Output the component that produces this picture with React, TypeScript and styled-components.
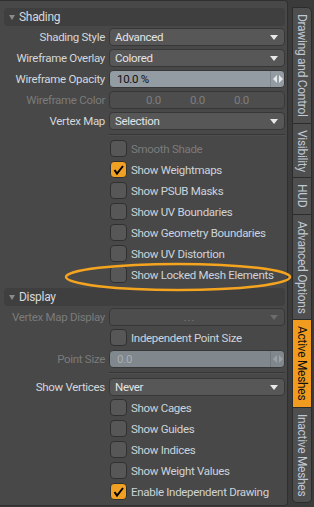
import { FC } from "react";
import styled, { createGlobalStyle } from "styled-components";

const GlobalStyle = createGlobalStyle`
  html, body {
    margin: 0;
    padding: 0;
    background: #3b3b3b;
  }
  body {
    font-family: Roboto, "Liberation Sans", Arial, sans-serif;
    font-size: 11.5px;
    letter-spacing: -0.3px;
    color: #cfd4da;
  }
`;

const Root = styled.div`
  position: relative;
  display: flex;
  width: 314px;
  height: 507px;
  overflow: hidden;
  background: #3b3b3b;
`;

const Panel = styled.div`
  position: relative;
  box-sizing: border-box;
  width: 288px;
  height: 506px;
  padding: 7px 2px 0 4px;
  background: #484848;
  border: 1px solid #2f2f2f;
  border-left: none;
  border-radius: 0 4px 4px 0;
`;

const SectionHeader = styled.div<{ $top?: number }>`
  display: flex;
  align-items: center;
  gap: 4px;
  height: 18px;
  margin-top: ${(p) => p.$top ?? 0}px;
  padding-left: 5px;
  background: #3f3f3f;
  border-radius: 4px;
  color: #d6d9dd;
  font-size: 12px;
`;

const HeaderArrow = styled.span`
  width: 0;
  height: 0;
  border-left: 3.5px solid transparent;
  border-right: 3.5px solid transparent;
  border-top: 5px solid #8a8a8a;
`;

const Row = styled.div`
  display: grid;
  grid-template-columns: 101px 1fr;
  column-gap: 4px;
  align-items: center;
  height: 21px;
`;

const Label = styled.div<{ $disabled?: boolean }>`
  text-align: right;
  white-space: nowrap;
  color: ${(p) => (p.$disabled ? "#7b7b7b" : "#d4d7db")};
`;

const Field = styled.div<{ $disabled?: boolean }>`
  box-sizing: border-box;
  position: relative;
  display: flex;
  align-items: center;
  height: 18px;
  padding-left: 5px;
  background: ${(p) => (p.$disabled ? "#4d4d4d" : "#575757")};
  border: 1px solid #373737;
  border-radius: 4px;
  color: ${(p) => (p.$disabled ? "#7d7d7d" : "#e2e4e6")};
`;

const DropArrow = styled.span<{ $disabled?: boolean }>`
  position: absolute;
  right: 6px;
  top: 6px;
  width: 0;
  height: 0;
  border-left: 4px solid transparent;
  border-right: 4px solid transparent;
  border-top: 5px solid ${(p) => (p.$disabled ? "#6c6c6c" : "#e8e8e8")};
`;

const Dots = styled.span`
  flex: 1;
  text-align: center;
  padding-right: 20px;
  color: #777;
  letter-spacing: 1px;
`;

const Slider = styled.div<{ $disabled?: boolean }>`
  box-sizing: border-box;
  display: flex;
  align-items: stretch;
  height: 18px;
  background: ${(p) => (p.$disabled ? "#80878d" : "#939ca3")};
  border: 1px solid #373737;
  border-radius: 4px;
  color: ${(p) => (p.$disabled ? "#a9aeb2" : "#111")};
  overflow: hidden;
`;

const SliderValue = styled.div`
  flex: 1;
  display: flex;
  align-items: center;
  padding-left: 7px;
`;

const SliderGrip = styled.div<{ $disabled?: boolean }>`
  width: 13px;
  display: flex;
  align-items: center;
  justify-content: center;
  border-left: 1px solid ${(p) => (p.$disabled ? "#70777c" : "#7f878d")};
  color: ${(p) => (p.$disabled ? "#9ba1a6" : "#e6e8ea")};
`;

const ColorCells = styled.div`
  display: grid;
  grid-template-columns: 46px 44px 44px 1fr;
  width: 100%;
`;

const ColorCell = styled.span`
  text-align: right;
`;

const Separator = styled.div`
  height: 7px;
  display: grid;
  grid-template-columns: 101px 1fr;
  column-gap: 4px;
  align-items: center;
  &::after {
    content: "";
    grid-column: 2;
    height: 1px;
    background: #363636;
    box-shadow: 0 1px 0 #4f4f4f;
  }
`;

const CheckRow = styled.label<{ $disabled?: boolean }>`
  display: flex;
  align-items: center;
  gap: 4px;
  height: 21px;
  padding-left: 106px;
  white-space: nowrap;
  color: ${(p) => (p.$disabled ? "#7b7b7b" : "#cdd3da")};
`;

const Box = styled.span<{ $checked?: boolean }>`
  box-sizing: border-box;
  width: 17px;
  height: 17px;
  display: flex;
  align-items: center;
  justify-content: center;
  border: 1px solid #303030;
  border-radius: 4px;
  background: ${(p) => (p.$checked ? "#f0a023" : "#575757")};
`;

const Highlight = styled.svg`
  position: absolute;
  left: 62px;
  top: 260px;
  pointer-events: none;
`;

const TabStrip = styled.div`
  display: flex;
  flex-direction: column;
  padding: 7px 0 0 4px;
`;

const Tab = styled.div<{ $active?: boolean; $last?: boolean }>`
  box-sizing: border-box;
  width: 20px;
  padding: 6px 0;
  writing-mode: vertical-rl;
  display: flex;
  align-items: center;
  white-space: nowrap;
  font-size: 12px;
  background: ${(p) => (p.$active ? "#f29c1f" : "#4f4f4f")};
  color: ${(p) => (p.$active ? "#111" : "#bfc8d4")};
  border: 1px solid #2c2c2c;
  border-top: none;
  border-radius: ${(p) => (p.$last ? "0 0 5px 5px" : "0")};
  &:first-child {
    border-top: 1px solid #2c2c2c;
    border-radius: 0 5px 0 0;
  }
`;

const Check: FC = () => (
  <svg width="13" height="13" viewBox="0 0 13 13">
    <path d="M2.5 7 L5 10.5 L11 3" fill="none" stroke="#000" strokeWidth="2" />
  </svg>
);

interface CheckItemProps {
  label: string;
  checked?: boolean;
  disabled?: boolean;
}

const CheckItem: FC<CheckItemProps> = ({ label, checked, disabled }) => (
  <CheckRow $disabled={disabled}>
    <Box $checked={checked}>{checked && <Check />}</Box>
    {label}
  </CheckRow>
);

const Dropdown: FC<{ label: string; value?: string; disabled?: boolean }> = ({
  label,
  value,
  disabled,
}) => (
  <Row>
    <Label $disabled={disabled}>{label}</Label>
    <Field $disabled={disabled}>
      {value ?? <Dots>...</Dots>}
      <DropArrow $disabled={disabled} />
    </Field>
  </Row>
);

const SliderRow: FC<{ label: string; value: string; disabled?: boolean }> = ({
  label,
  value,
  disabled,
}) => (
  <Row>
    <Label $disabled={disabled}>{label}</Label>
    <Slider $disabled={disabled}>
      <SliderValue>{value}</SliderValue>
      <SliderGrip $disabled={disabled}>
        <svg width="10" height="8" viewBox="0 0 10 8">
          <path d="M4 0 L0 4 L4 8 Z M6 0 L10 4 L6 8 Z" fill="currentColor" />
        </svg>
      </SliderGrip>
    </Slider>
  </Row>
);

const tabs = [
  "Drawing and Control",
  "Visibility",
  "HUD",
  "Advanced Options",
  "Active Meshes",
  "Inactive Meshes",
];

const App: FC = () => {
  return (
    <Root>
      <GlobalStyle />
      <Panel>
        <SectionHeader>
          <HeaderArrow />
          Shading
        </SectionHeader>
        <Dropdown label="Shading Style" value="Advanced" />
        <Dropdown label="Wireframe Overlay" value="Colored" />
        <SliderRow label="Wireframe Opacity" value="10.0 %" />
        <Row>
          <Label $disabled>Wireframe Color</Label>
          <Field $disabled>
            <ColorCells>
              <ColorCell>0.0</ColorCell>
              <ColorCell>0.0</ColorCell>
              <ColorCell>0.0</ColorCell>
            </ColorCells>
          </Field>
        </Row>
        <Dropdown label="Vertex Map" value="Selection" />
        <Separator />
        <CheckItem label="Smooth Shade" disabled />
        <CheckItem label="Show Weightmaps" checked />
        <CheckItem label="Show PSUB Masks" />
        <CheckItem label="Show UV Boundaries" />
        <CheckItem label="Show Geometry Boundaries" />
        <CheckItem label="Show UV Distortion" />
        <CheckItem label="Show Locked Mesh Elements" />

        <SectionHeader $top={3}>
          <HeaderArrow />
          Display
        </SectionHeader>
        <Dropdown label="Vertex Map Display" disabled />
        <CheckItem label="Independent Point Size" />
        <SliderRow label="Point Size" value="0.0" disabled />
        <Separator />
        <Dropdown label="Show Vertices" value="Never" />
        <CheckItem label="Show Cages" />
        <CheckItem label="Show Guides" />
        <CheckItem label="Show Indices" />
        <CheckItem label="Show Weight Values" />
        <CheckItem label="Enable Independent Drawing" checked />

        <Highlight width="236" height="34" viewBox="0 0 236 34">
          <ellipse
            cx="116"
            cy="16"
            rx="112"
            ry="13"
            fill="none"
            stroke="#f5a41f"
            strokeWidth="2.5"
          />
        </Highlight>
      </Panel>
      <TabStrip>
        {tabs.map((t, i) => (
          <Tab key={t} $active={t === "Active Meshes"} $last={i === tabs.length - 1}>
            {t}
          </Tab>
        ))}
      </TabStrip>
    </Root>
  );
};

export default App;
